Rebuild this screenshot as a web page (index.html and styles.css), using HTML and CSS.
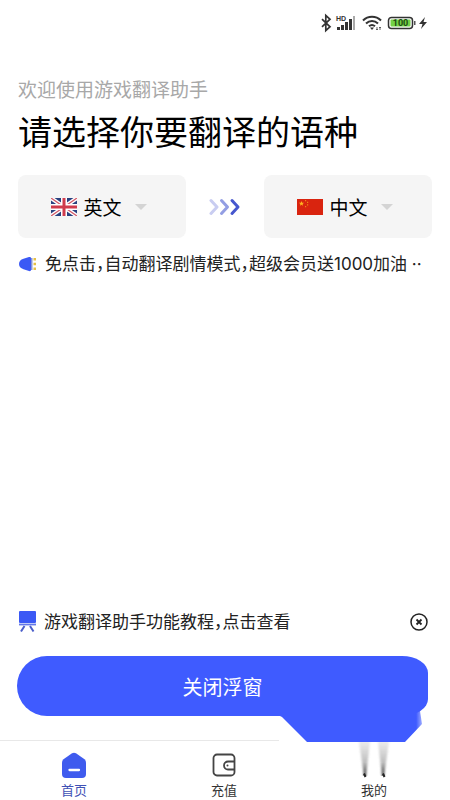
FILE: index.html
```html
<!DOCTYPE html>
<html lang="zh-CN">
<head>
<meta charset="utf-8">
<meta name="viewport" content="width=device-width, initial-scale=1">
<title>游戏翻译助手</title>
<link rel="stylesheet" href="styles.css">
</head>
<body>
<div class="app">
  <header class="status">
    <svg width="110" height="20" viewBox="0 0 110 20" role="img" aria-label="100">
      <path d="M2 6.200l8 7.600-4.200 3.700V2.500L10 6.200l-8 7.600" fill="none" stroke="#333" stroke-width="1.700"/>
      <text class="status-hd" x="16" y="8">HD</text>
      <g fill="#333">
        <rect x="17" y="14" width="3" height="3"/><rect x="21" y="12" width="3" height="5"/><rect x="25" y="9" width="3" height="8"/><rect x="29" y="6" width="3" height="11"/>
        <rect x="33" y="3" width="2" height="14" fill="#aaa"/>
      </g>
      <g fill="none" stroke="#333" stroke-width="2">
        <path d="M43 7.500c5-5 13-5 18 0M46 10.500c3.500-3.500 8.500-3.500 12 0M49 13.300c2-1.800 4-1.800 6 0"/>
      </g>
      <path d="M50 14.500h4l-2 2.500z" fill="#333"/>
      <path d="M57 14v3m-1-1l1 1 1-1M60 17v-3m-1 1l1-1 1 1" fill="none" stroke="#444" stroke-width=".8"/>
      <rect x="68.500" y="4.500" width="24" height="11" rx="3" fill="#fff" stroke="#333" stroke-width="1.500"/>
      <rect x="70.500" y="6.500" width="20" height="7" rx="1" fill="#73d246"/>
      <rect x="94" y="8" width="1.500" height="4" fill="#555"/>
      <text class="status-level" x="80.500" y="13.300" text-anchor="middle">100</text>
      <path d="M105 4l-6 7h3.500L101 16l6-7h-3.500z" fill="#333"/>
    </svg>
  </header>

  <main class="main">
    <p class="welcome">欢迎使用游戏翻译助手</p>
    <h1 class="title">请选择你要翻译的语种</h1>

    <div class="languages">
      <button class="language" type="button">
        <svg width="26" height="18" viewBox="0 0 26 18" aria-hidden="true">
          <path fill="#29417f" d="M0 0h26v18H0z"/>
          <path d="M0 0l26 18M26 0L0 18" stroke="#fff" stroke-width="4"/>
          <path d="M0 0l26 18M26 0L0 18" stroke="#d35a68" stroke-width="1.300"/>
          <path d="M13 0v18M0 9h26" stroke="#fff" stroke-width="6"/>
          <path d="M13 0v18M0 9h26" stroke="#cf3b4c" stroke-width="3"/>
        </svg>
        <span class="language-name">英文</span>
        <svg width="12" height="6" viewBox="0 0 12 6" aria-hidden="true"><path d="M0 0h12L6 6z" fill="#d4d4d4"/></svg>
      </button>
      <svg class="arrows" width="32" height="18" viewBox="0 0 32 18" fill="none" stroke-width="3" stroke-linecap="round" stroke-linejoin="round" aria-hidden="true">
        <path d="M2 2.500L8 9l-6 6.500" stroke="#c9cdf1"/>
        <path d="M12.500 2.500l6 6.500-6 6.500" stroke="#939ee3"/>
        <path d="M23 2.500L29 9l-6 6.500" stroke="#4657ce"/>
      </svg>
      <button class="language" type="button">
        <svg width="26" height="16" viewBox="0 0 26 16" aria-hidden="true">
          <path fill="#d9240f" d="M0 0h26v16H0z"/>
          <path d="M4.500 2l.7 1.700 1.900.1-1.500 1.200.5 1.800-1.600-1-1.600 1 .5-1.800-1.500-1.200 1.900-.1z" fill="#ffb41f"/>
          <path d="M8 1h1.200v1.200H8zM10 2.800h1.200V4H10zM10 5.200h1.200v1.200H10zM8 7h1.200v1.200H8z" fill="#f08318"/>
        </svg>
        <span class="language-name">中文</span>
        <svg width="12" height="6" viewBox="0 0 12 6" aria-hidden="true"><path d="M0 0h12L6 6z" fill="#d4d4d4"/></svg>
      </button>
    </div>

    <p class="line notice">
      <svg class="line-icon" width="19" height="16" viewBox="0 0 19 16" aria-hidden="true">
        <path d="M13 2q0-1.500-2-1L5.500 2.800Q1 4.200 1 8t4.500 5.200L11 15q2 .5 2-1z" fill="#3b59f5"/>
        <path d="M13 2h1.500v12H13z" fill="#8895d8"/>
        <path d="M15.500 2H18v2.500h-2.500zM15.500 6.800H18v2.500h-2.500zM15.500 11.500H18V14h-2.500z" fill="#e6c044"/>
      </svg>
      <span class="line-text">免点击，自动翻译剧情模式，超级会员送1000加油 ··</span>
    </p>

    <div class="line tutorial">
      <svg class="line-icon" width="18" height="22" viewBox="0 0 18 22" aria-hidden="true">
        <rect x="1" y="0" width="17" height="12" rx="1" fill="#3b59f5"/>
        <path d="M1 13.500h17" stroke="#6378e9" stroke-width="1.800"/>
        <path d="M6.500 15L3 20.500M12 15l3.500 5.500" stroke="#4a5dc9" stroke-width="2"/>
      </svg>
      <a class="line-text" href="#tutorial">游戏翻译助手功能教程，点击查看</a>
      <button class="close" type="button" aria-label="关闭">
        <svg width="18" height="18" viewBox="0 0 18 18" fill="none" stroke="#222" aria-hidden="true">
          <circle cx="9" cy="9" r="8" stroke-width="1.500"/>
          <path d="M6.500 6.500l5 5m0-5l-5 5" stroke-width="1.800"/>
        </svg>
      </button>
    </div>

    <div class="action">
      <button class="primary" type="button">关闭浮窗</button>
      <svg class="drape" width="152" height="38" viewBox="0 0 152 38" aria-hidden="true">
        <defs>
          <linearGradient id="edge" x1="0" x2="1">
            <stop offset="0" stop-color="#3f5bff"/><stop offset=".96" stop-color="#3f5bff"/><stop offset="1" stop-color="#3f5bff" stop-opacity=".5"/>
          </linearGradient>
        </defs>
        <path d="M0 9H130L136 2h7l1 4 2 13-17 18H31L6 12z" fill="url(#edge)"/>
      </svg>
    </div>
  </main>

  <nav class="tabs">
    <a class="tab tab-active" href="#home">
      <svg width="26" height="26" viewBox="0 0 26 26" aria-hidden="true">
        <path d="M11 1.300q2-1.300 4 0l8.500 6Q25 8.500 25 10.500V22q0 4-4 4H5q-4 0-4-4V10.500q0-2 1.500-3.200z" fill="#3f5bee"/>
        <path d="M8.500 18h9.500" stroke="#fff" stroke-width="2.300" stroke-linecap="round"/>
      </svg>
      <span>首页</span>
    </a>
    <a class="tab" href="#recharge">
      <svg width="26" height="26" viewBox="0 0 26 26" fill="none" stroke="#444" stroke-width="1.800" aria-hidden="true">
        <rect x="2.500" y="2.500" width="21" height="21" rx="3.500"/>
        <path d="M23.500 9.500H17a4 4 0 0 0 0 8h6.500"/>
        <circle cx="16.500" cy="13.500" r="1" fill="#444" stroke="none"/>
      </svg>
      <span>充值</span>
    </a>
    <a class="tab tab-mine" href="#mine">
      <svg width="34" height="36" viewBox="0 0 34 36" aria-hidden="true">
        <defs>
          <linearGradient id="fade" x1="0" y1="0" x2="0" y2="1">
            <stop offset="0" stop-color="#999" stop-opacity=".2"/><stop offset=".6" stop-color="#888" stop-opacity=".55"/><stop offset="1" stop-color="#333"/>
          </linearGradient>
          <filter id="soft" x="-50%" y="-10%" width="200%" height="120%"><feGaussianBlur stdDeviation="1.300 .5"/></filter>
        </defs>
        <path d="M2 0h11L9 34H7zM21 0h11l-5 34h-2z" fill="url(#fade)" filter="url(#soft)"/>
        <path d="M7 31.500l1.500 3.500M26 31.500l1.500 3.500" stroke="#222" stroke-width="2"/>
      </svg>
      <span>我的</span>
    </a>
  </nav>
</div>
</body>
</html>
```
FILE: styles.css
```css
* {
  box-sizing: border-box;
}

body {
  margin: 0;
  background: #fff;
  color: #111;
  font-family: "Noto Sans CJK SC", sans-serif;
}

button {
  border: 0;
  padding: 0;
  font: inherit;
  color: inherit;
  cursor: pointer;
}

a {
  color: inherit;
  text-decoration: none;
}

svg {
  display: block;
  flex: none;
}

.app {
  display: flex;
  flex-direction: column;
  min-height: 100vh;
}

.status {
  display: flex;
  justify-content: flex-end;
  padding: 13px 20px 0 0;
}

.status-hd {
  font: 700 7px "Liberation Sans", sans-serif;
  fill: #333;
}

.status-level {
  font: 700 9px Roboto, sans-serif;
  fill: #1c4a12;
}

.main {
  display: flex;
  flex: 1;
  flex-direction: column;
  padding: 42px 18px 24px;
}

.welcome {
  margin: 0;
  color: #a8a8a8;
  font-size: 19px;
  line-height: 28px;
}

.title {
  margin: 5px 0 0;
  color: #000;
  font-size: 34px;
  font-weight: 400;
  line-height: 46px;
}

.languages {
  display: flex;
  align-items: center;
  justify-content: space-between;
  margin-top: 21px;
}

.language {
  display: flex;
  flex: 0 1 168px;
  align-items: center;
  justify-content: center;
  height: 63px;
  padding-right: 6px;
  border-radius: 8px;
  background: #f5f5f5;
  color: #000;
}

.language-name {
  margin: 0 13px 0 6px;
  font-size: 19px;
  line-height: 28px;
}

.line {
  display: flex;
  align-items: center;
  gap: 8px;
  color: #222;
  font-family: Inter, "Noto Sans CJK SC", sans-serif;
  font-size: 17px;
  font-feature-settings: "halt";
  line-height: 24px;
}

.line-text {
  flex: 1;
  white-space: nowrap;
}

.notice {
  margin: 14px 0 0;
}

.tutorial {
  margin: auto 4px 0 0;
}

.close {
  background: none;
}

.action {
  position: relative;
  margin: 22px 4px 0 -1px;
}

.primary {
  display: block;
  width: 100%;
  height: 60px;
  border-radius: 30px 26px 26px 30px / 30px 17px 17px 30px;
  background: #3f5bff;
  color: #fff;
  font-size: 20px;
}

.drape {
  position: absolute;
  right: 0;
  bottom: -27px;
}

.tabs {
  display: grid;
  grid-template-columns: repeat(3, 1fr);
  height: 60px;
  background: linear-gradient(to right, #e8e8e8 62%, #fff 62%) top / 100% 1px no-repeat;
}

.tab {
  display: flex;
  flex-direction: column;
  align-items: center;
  justify-content: flex-end;
  gap: 3px;
  padding: 0 2px 1px 0;
  color: #333;
  font-size: 13px;
  line-height: 18px;
}

.tab-active {
  color: #3f51b5;
}
```
